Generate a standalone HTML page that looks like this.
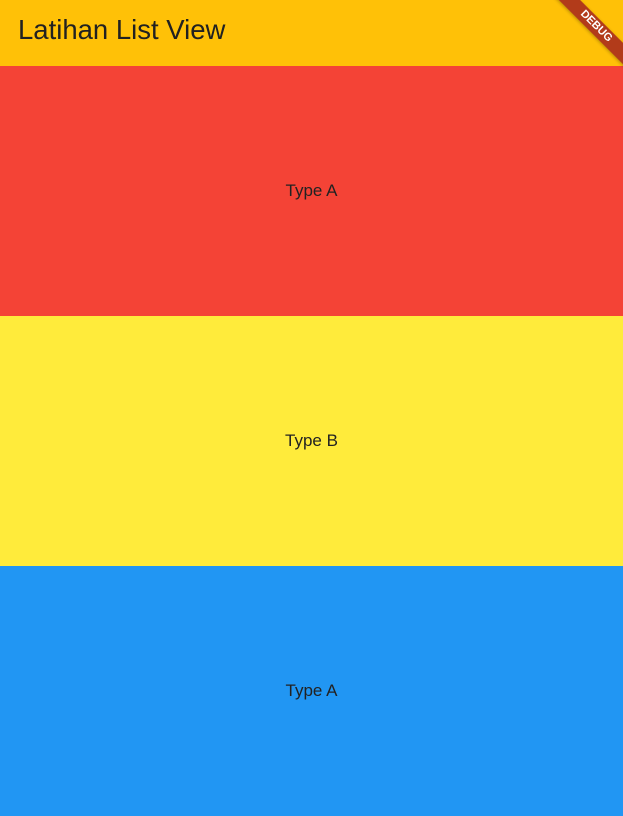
<!DOCTYPE html>
<html><head><style>
html,body{margin:0;padding:0;width:623px;height:782px;overflow:hidden;font-family:"Liberation Sans",sans-serif;}
.bar{position:absolute;left:0;top:0;width:623px;height:66px;background:#ffc107;z-index:2}
.bar span{position:absolute;left:18px;top:14px;font-size:27.5px;color:#212121;}
.item{position:absolute;left:0;width:623px;height:250px;display:flex;align-items:center;justify-content:center;font-size:17px;color:#222;}
.banner{position:absolute;left:536px;top:19px;width:120px;height:15px;background:#b23b1a;transform:rotate(45deg);color:#fff;font-size:11px;font-weight:bold;text-align:center;line-height:15px;z-index:3;box-shadow:0 1px 3px rgba(0,0,0,.3)}
</style></head><body>
<div class="bar"><span>Latihan List View</span></div>
<div class="banner">DEBUG</div>
<div class="item" style="top:66px;background:#f44336">Type A</div>
<div class="item" style="top:316px;background:#ffeb3b">Type B</div>
<div class="item" style="top:566px;background:#2196f3">Type A</div>
</body></html>
